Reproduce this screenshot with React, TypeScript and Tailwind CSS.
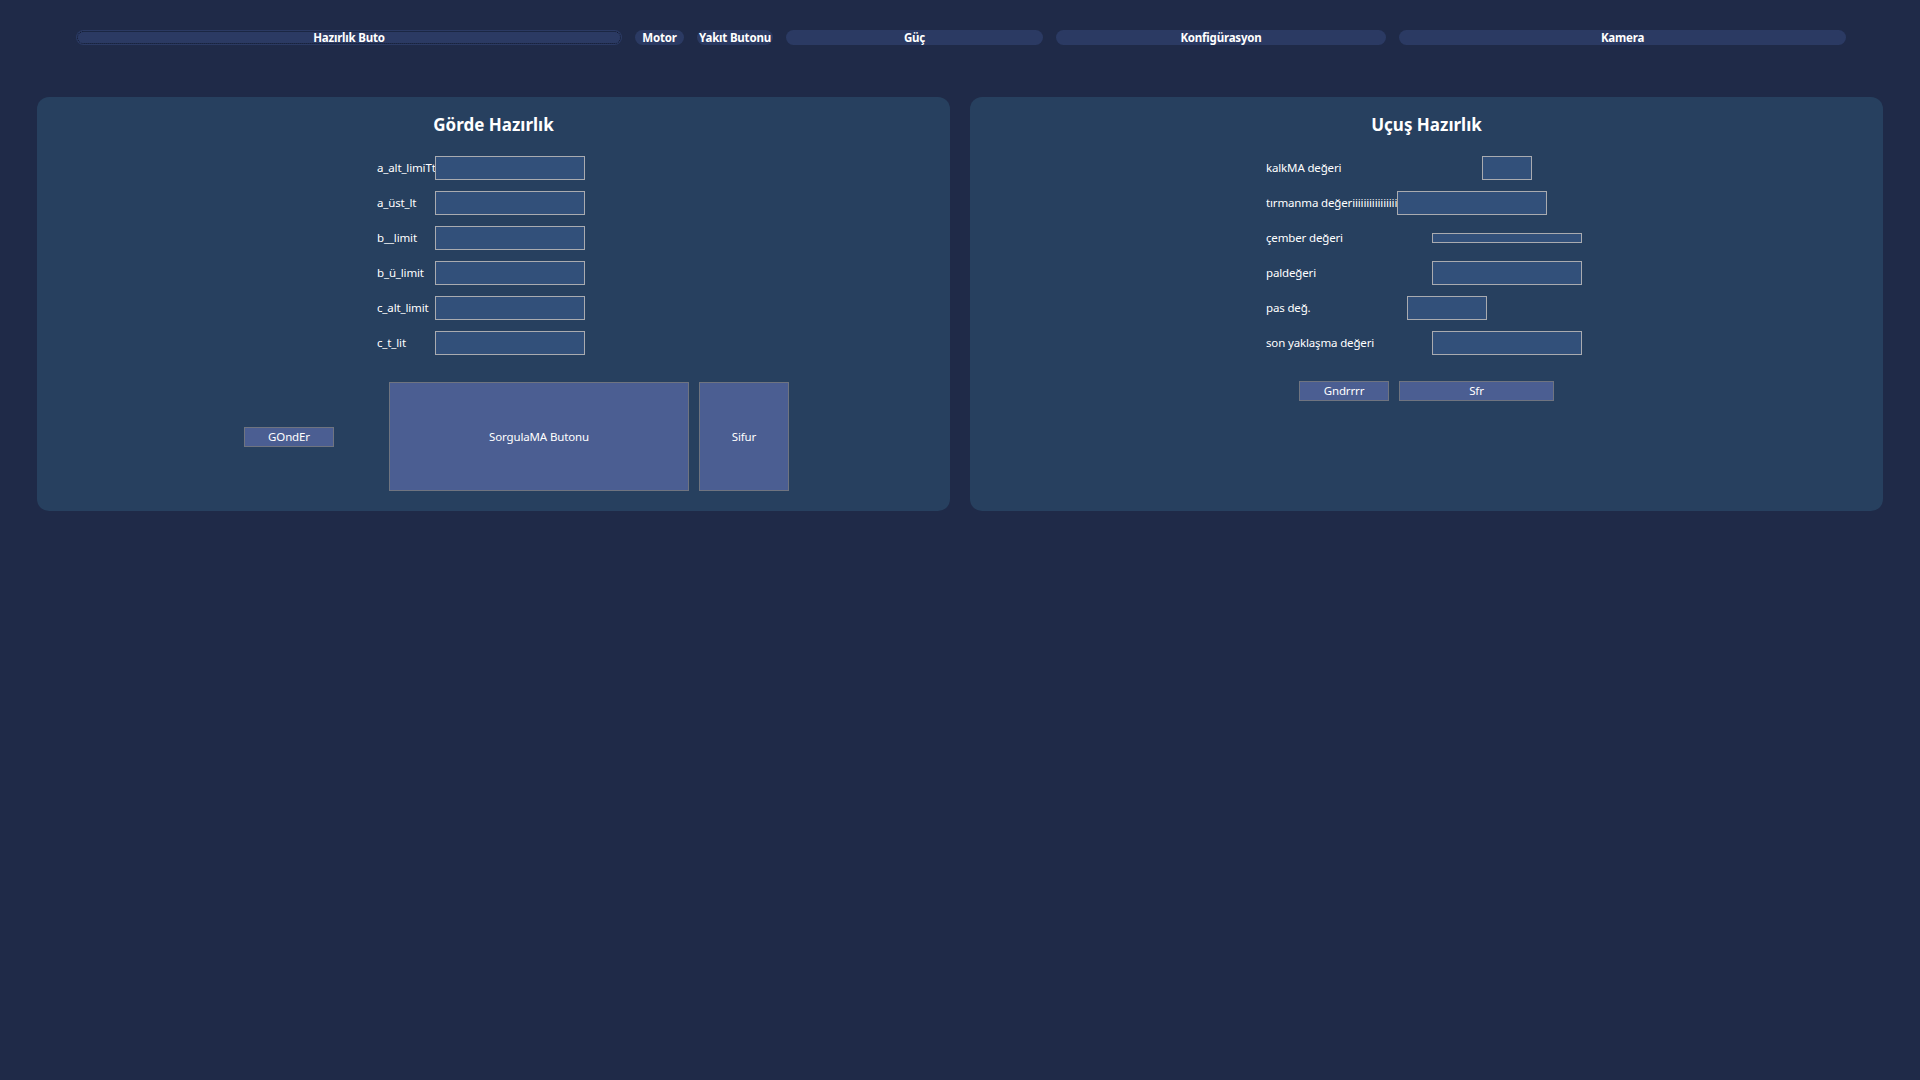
import React from "react";

const FONT = { fontFamily: '"Segoe UI", "Noto Sans", "Open Sans", sans-serif' };

const TABS: { label: string; width: string; focused?: boolean }[] = [
  { label: "Hazırlık Buto", width: "w-[546px]", focused: true },
  { label: "Motor", width: "w-[49px]" },
  { label: "Yakıt Butonu", width: "w-[76px]" },
  { label: "Güç", width: "w-[257px]" },
  { label: "Konfigürasyon", width: "w-[330px]" },
  { label: "Kamera", width: "w-[447px]" },
];

const LEFT_ROWS = ["a_alt_limiTt", "a_üst_lt", "b__limit", "b_ü_limit", "c_alt_limit", "c_t_lit"];

// right form: label box width decides where the input starts
const RIGHT_ROWS: { label: string; labelW: string; inputCls: string }[] = [
  { label: "kalkMA değeri", labelW: "w-[216px]", inputCls: "w-[50px] h-[24px]" },
  { label: "tırmanma değeriiiiiiiiiiiiiiiiiiiiiiiiii", labelW: "w-[131px]", inputCls: "w-[150px] h-[24px]" },
  { label: "çember değeri", labelW: "w-[166px]", inputCls: "w-[150px] h-[10px]" },
  { label: "paldeğeri", labelW: "w-[166px]", inputCls: "w-[150px] h-[24px]" },
  { label: "pas değ.", labelW: "w-[141px]", inputCls: "w-[80px] h-[24px]" },
  { label: "son yaklaşma değeri", labelW: "w-[166px]", inputCls: "w-[150px] h-[24px]" },
];

function Field({ cls }: { cls: string }) {
  return <div className={`relative shrink-0 border border-[#a9abb0] bg-[#32507a] ${cls}`} />;
}

function Btn({ label, cls }: { label: string; cls: string }) {
  return (
    <button
      className={`flex shrink-0 items-center justify-center border border-[#6f7480] bg-[#4b5e92] text-[11.5px] tracking-[-0.15px] text-white ${cls}`}
      style={FONT}
    >
      {label}
    </button>
  );
}

export default function App() {
  return (
    <div className="min-h-[1080px] w-full bg-[#1f2a48] text-white" style={FONT}>
      <div className="flex gap-[13px] pl-[76px] pt-[30px]">
        {TABS.map((t) => (
          <div
            key={t.label}
            className={`flex h-[15px] items-center justify-center whitespace-nowrap rounded-full bg-[#2b3a63] text-[11.5px] font-bold leading-none tracking-[-0.2px] text-white ${t.width} ${
              t.focused ? "outline-1 outline-dotted outline-[#0d1426] -outline-offset-2" : ""
            }`}
          >
            {t.label}
          </div>
        ))}
      </div>

      <div className="mt-[52px] flex gap-[20px] px-[37px]">
        {/* Görde Hazırlık */}
        <div className="flex h-[414px] w-[913px] flex-col rounded-[12px] bg-[#27405f] pt-[16px]">
          <h2 className="text-center text-[17px] font-bold leading-[24px]">Görde Hazırlık</h2>
          <div className="mt-[19px] flex flex-col gap-[11px] pl-[340px]">
            {LEFT_ROWS.map((l) => (
              <div key={l} className="flex h-[24px] items-center">
                <span className="w-[58px] overflow-hidden whitespace-nowrap text-[11.5px] tracking-[-0.15px]">{l}</span>
                <Field cls="w-[150px] h-[24px]" />
              </div>
            ))}
          </div>
          <div className="mt-[27px] flex items-center pl-[207px]">
            <Btn label="GOndEr" cls="w-[90px] h-[20px]" />
            <Btn label="SorgulaMA Butonu" cls="ml-[55px] w-[300px] h-[109px]" />
            <Btn label="Sifur" cls="ml-[10px] w-[90px] h-[109px]" />
          </div>
        </div>

        {/* Uçuş Hazırlık */}
        <div className="flex h-[414px] w-[913px] flex-col rounded-[12px] bg-[#27405f] pt-[16px]">
          <h2 className="text-center text-[17px] font-bold leading-[24px]">Uçuş Hazırlık</h2>
          <div className="mt-[19px] flex flex-col gap-[11px] pl-[296px]">
            {RIGHT_ROWS.map((r) => (
              <div key={r.label} className="flex h-[24px] items-center">
                <span className={`overflow-hidden whitespace-nowrap text-[11.5px] tracking-[-0.15px] ${r.labelW}`}>{r.label}</span>
                <Field cls={r.inputCls} />
              </div>
            ))}
          </div>
          <div className="mt-[26px] flex items-center pl-[329px]">
            <Btn label="Gndrrrr" cls="w-[90px] h-[20px]" />
            <Btn label="Sfr" cls="ml-[10px] w-[155px] h-[20px]" />
          </div>
        </div>
      </div>
    </div>
  );
}
